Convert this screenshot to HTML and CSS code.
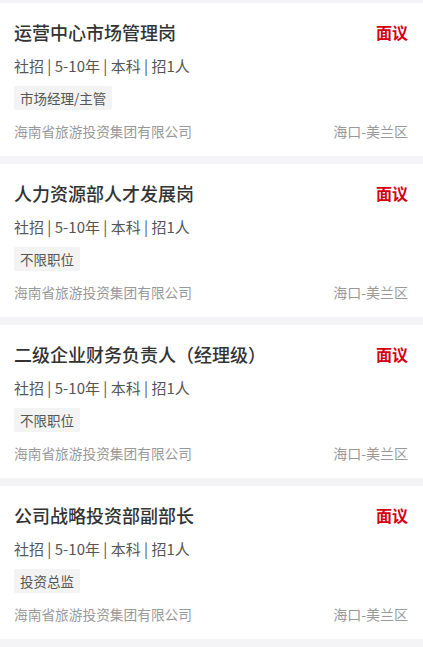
FILE: index.html
```html
<!DOCTYPE html>
<html lang="zh-CN">
<head>
    <meta charset="utf-8">
    <title>职位列表</title>
    <link rel="stylesheet" href="styles.css">
</head>
<body>
    <div class="job-list">
        <div class="job">
            <div class="job-head">
                <div class="job-title">运营中心市场管理岗</div>
                <div class="job-salary">面议</div>
            </div>
            <div class="job-info">社招 | 5-10年 | 本科 | 招1人</div>
            <div class="job-tags"><span class="tag">市场经理/主管</span></div>
            <div class="job-foot">
                <span class="company">海南省旅游投资集团有限公司</span>
                <span class="place">海口-美兰区</span>
            </div>
        </div>

        <div class="job">
            <div class="job-head">
                <div class="job-title">人力资源部人才发展岗</div>
                <div class="job-salary">面议</div>
            </div>
            <div class="job-info">社招 | 5-10年 | 本科 | 招1人</div>
            <div class="job-tags"><span class="tag">不限职位</span></div>
            <div class="job-foot">
                <span class="company">海南省旅游投资集团有限公司</span>
                <span class="place">海口-美兰区</span>
            </div>
        </div>

        <div class="job">
            <div class="job-head">
                <div class="job-title">二级企业财务负责人（经理级）</div>
                <div class="job-salary">面议</div>
            </div>
            <div class="job-info">社招 | 5-10年 | 本科 | 招1人</div>
            <div class="job-tags"><span class="tag">不限职位</span></div>
            <div class="job-foot">
                <span class="company">海南省旅游投资集团有限公司</span>
                <span class="place">海口-美兰区</span>
            </div>
        </div>

        <div class="job">
            <div class="job-head">
                <div class="job-title">公司战略投资部副部长</div>
                <div class="job-salary">面议</div>
            </div>
            <div class="job-info">社招 | 5-10年 | 本科 | 招1人</div>
            <div class="job-tags"><span class="tag">投资总监</span></div>
            <div class="job-foot">
                <span class="company">海南省旅游投资集团有限公司</span>
                <span class="place">海口-美兰区</span>
            </div>
        </div>
    </div>
</body>
</html>
```

FILE: styles.css
```css
body {
    margin: 0;
    background-color: #f4f4f6;
    font-family: "Noto Sans CJK SC", "Noto Sans", sans-serif;
}

.job-list {
    display: flex;
    flex-direction: column;
    gap: 8px;
    padding-top: 3px;
}

.job {
    background-color: #fff;
    padding: 17px 15px 15px 14px;
}

.job-head {
    display: flex;
    justify-content: space-between;
    align-items: center;
    height: 24px;
}

.job-title {
    font-size: 18px;
    line-height: 24px;
    font-weight: 500;
    color: #333;
}

.job-salary {
    font-size: 16px;
    line-height: 24px;
    font-weight: 700;
    color: #d4000f;
}

.job-info {
    margin-top: 11px;
    font-size: 15px;
    line-height: 22px;
    color: #555;
}

.job-tags {
    display: flex;
    margin-top: 9px;
}

.tag {
    background-color: #f3f3f3;
    color: #555;
    font-size: 13.5px;
    line-height: 24px;
    padding: 0 6px;
    border-radius: 2px;
}

.job-foot {
    display: flex;
    justify-content: space-between;
    margin-top: 11px;
    font-size: 13.7px;
    line-height: 20px;
    color: #999;
}

.place {
    font-size: 14px;
}
```
